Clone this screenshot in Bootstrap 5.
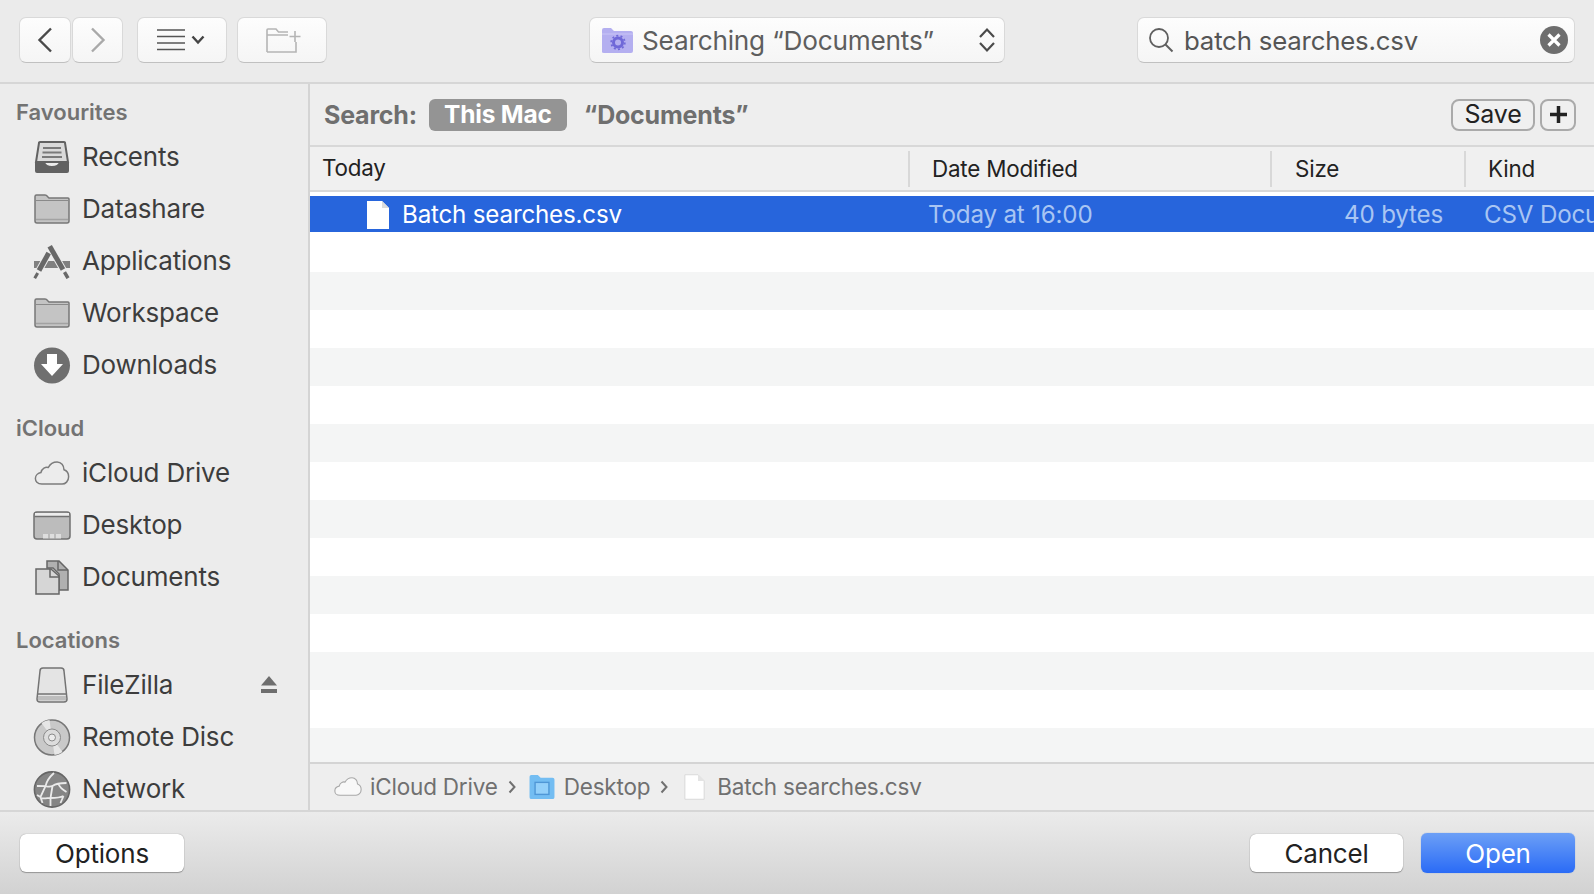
<!DOCTYPE html>
<html lang="en">
<head>
  <meta charset="UTF-8" />
  <title>Open</title>
  <link href="https://cdn.jsdelivr.net/npm/bootstrap@5.3.0/dist/css/bootstrap.min.css" rel="stylesheet" />
  <style>
    html, body { height: 100%; overflow: hidden; }
    body { font-family: Inter, "Liberation Sans", sans-serif; font-size: 26px; color: #3c3c3c; background: #ececec; letter-spacing: -.2px; line-height: 1.2; }
    .dlg { width: 1594px; height: 894px; }

    .tool-bar { height: 84px; flex: none; background: #ebebeb; border-bottom: 2px solid #d6d6d6; padding: 17px 19px 0; }
    .mac-tool { height: 46px; border-radius: 7px; background: linear-gradient(#fdfdfd, #f5f5f5); border: 1px solid #d9d9d9; border-bottom-color: #c0c0c0; padding: 0; }
    .tool-back { width: 52px; }
    .tool-fwd { width: 51px; margin-left: 1px; }
    .tool-view { width: 90px; margin-left: 14px; padding-right: 3px; }
    .tool-view.mac-tool { column-gap: 6px; }
    .tool-new { width: 90px; margin-left: 10px; }
    .tool-new svg { margin-left: 3px; }
    .place-pop { width: 416px; margin-left: 262px; padding: 2px 8px 0 12px; color: #5e5e5e; }
    .place-pop span { margin-left: 1px; font-size: 26.200px; }
    .find-box { width: 438px; margin-left: 132px; padding: 2px 6px 0 10px; color: #555; }
    .find-box span { margin-left: 2px; font-size: 25.800px; }
    .find-box svg, .place-pop svg { margin-top: -2px; }

    .mid-area { height: 726px; flex: none; }
    .side-bar { width: 310px; flex: none; background: #ececec; border-right: 2px solid #d4d4d4; padding-top: 15px; overflow: hidden; }
    .side-head { height: 26px; padding-left: 16px; font-size: 22px; font-weight: 600; color: #737373; line-height: 26px; letter-spacing: 0; }
    .side-gap { margin-top: 24px; }
    .side-row { height: 52px; padding-left: 33px; color: #3d3d3d; }
    .side-icon { width: 38px; margin-right: 11px; flex: none; }
    .side-head + .side-row { margin-top: 6px; }
    .eject-mark { margin-left: auto; margin-right: 30px; }

    .main-pane { min-width: 0; background: #fff; }
    .scope-bar { height: 63px; flex: none; background: #eeeeee; border-bottom: 2px solid #d8d8d8; padding: 0 18px 0 14px; font-size: 25px; font-weight: 700; color: #6f6f6f; }
    .scope-pill { height: 32px; width: 138px; margin-left: 12px; border-radius: 6px; background: #949494; color: #fff; font-size: 24.500px; }
    .scope-doc { margin-left: 17px; }
    .scope-btn { height: 32px; border: 2px solid #aaaaaa; border-radius: 8px; background: #f0f0f0; color: #222; font-weight: 400; font-size: 25px; letter-spacing: -.2px; line-height: 1; padding: 0; }
    .scope-save { width: 84px; margin-left: auto; }
    .scope-add { width: 36px; margin-left: 5px; }

    .col-heads { height: 45px; flex: none; background: #f0f0f0; border-bottom: 2px solid #d8d8d8; color: #222; font-size: 22.400px; }
    .cell-name { width: 598px; flex: none; }
    .cell-date { width: 362px; flex: none; }
    .cell-size { width: 194px; flex: none; }
    .col-heads .cell-name { padding-left: 12px; }
    .col-heads .cell-date, .col-heads .cell-size, .col-heads .cell-kind { padding-left: 22px; height: 36px; line-height: 36px; border-left: 2px solid #d8d8d8; }
    .col-heads .cell-size { padding-left: 23px; }
    .col-heads .cell-kind { flex: 1; }

    .file-list { flex: 1; overflow: hidden; background: #fff; padding-top: 4px; min-height: 0; }
    .file-row { height: 38px; flex: none; }
    .file-row:nth-child(odd) { background: #f4f5f5; }
    .file-row:nth-child(even) { background: #fff; }
    .file-row.sel-row { background: #2765dc; height: 36px; margin-bottom: 1.500px; padding-top: 1px; color: #fff; font-size: 24.200px; white-space: nowrap; overflow: hidden; }
    .sel-row .cell-name { padding-left: 56px; }
    .sel-row .file-txt { margin-left: 12px; }
    .sel-row .cell-date { padding-left: 20px; color: #a9c5f3; }
    .sel-row .cell-size { color: #a9c5f3; text-align: right; padding-right: 21px; }
    .sel-row .cell-kind { color: #a9c5f3; padding-left: 20px; }

    .path-bar { height: 48px; flex: none; background: #eeeeee; border-top: 2px solid #d4d4d4; padding: 0 0 1px 24px; font-size: 22.500px; color: #707070; }
    .path-sep { margin: 0 13px 0 10px; }
    .path-cloud { margin-right: 8px; }
    .path-folder { margin-right: 9px; }
    .path-doc { margin-left: 3px; margin-right: 12px; }

    .foot-bar { height: 84px; flex: none; background: linear-gradient(#ebebeb, #d2d2d2); border-top: 2px solid #d6d6d6; padding: 22px 19px 0 20px; }
    .push-btn { height: 38px; border: 0; border-radius: 6px; background: #fff; box-shadow: 0 0 1px #777, 0 1px 1px #999; color: #222; padding: 0; font-size: 26px; letter-spacing: -.2px; }
    .push-opts { width: 164px; }
    .push-cancel { width: 153px; margin-left: auto; }
    .push-open { width: 154px; margin-left: 18px; height: 40px; margin-top: -1px; color: #fff; background: linear-gradient(#6c9ff6, #2a6bf6); box-shadow: 0 0 1px #5b8de0; }
    .push-btn:hover, .push-btn:active { background: #fff; color: #222; }
    .push-open:hover, .push-open:active { background: linear-gradient(#6c9ff6, #2a6bf6); color: #fff; }
  </style>
</head>
<body>
  <svg width="0" height="0" class="position-absolute">
    <symbol id="ic-folder" viewBox="0 0 36 30">
      <path d="M1 27V2.500Q1 1 2.500 1H11q1.500 0 2.500 1.500L15 4h19q1 0 1 1v22q0 2-2 2H3q-2 0-2-2z" fill="#c4c4c4" stroke="#777" stroke-width="1.500"/>
      <path d="M1.500 6.500h33" stroke="#8a8a8a" fill="none"/>
      <path d="M2 25.500h32" stroke="#a2a2a2" stroke-width="1.500" fill="none"/>
    </symbol>
    <symbol id="ic-doc" viewBox="0 0 24 30">
      <path d="M1 1h15l7 7v21H1z" fill="#fff"/>
      <path d="M16 1v7h7z" fill="#dcdcdc"/>
    </symbol>
    <symbol id="ic-cloud" viewBox="0 0 38 26">
      <path d="M8 25C3 25 1 21.500 1 19c0-3.500 3-6 6-6.500C8 8 12 6 15 7c2-4 6-6 9.500-6C29 1 32 5 32 9.500c3 1 5 4 5 7.500 0 5-3.500 8-7 8z"/>
    </symbol>
  </svg>

  <div class="dlg d-flex flex-column">
    <div class="tool-bar d-flex align-items-start">
      <button class="btn mac-tool tool-back d-flex align-items-center justify-content-center" type="button" aria-label="Back">
        <svg width="16" height="26" viewBox="0 0 16 26"><path d="M14 1.500 2.500 13 14 24.500" fill="none" stroke="#4a4a4a" stroke-width="2.400"/></svg>
      </button>
      <button class="btn mac-tool tool-fwd d-flex align-items-center justify-content-center" type="button" aria-label="Forward">
        <svg width="16" height="26" viewBox="0 0 16 26"><path d="M2 1.500 13.500 13 2 24.500" fill="none" stroke="#a9a9a9" stroke-width="2.400"/></svg>
      </button>
      <button class="btn mac-tool tool-view d-flex align-items-center justify-content-center" type="button" aria-label="View">
        <svg width="28" height="22" viewBox="0 0 28 22"><path d="M0 1h28M0 7.500h28M0 14h28M0 20.500h28" stroke="#555" stroke-width="1.600"/></svg>
        <svg width="14" height="10" viewBox="0 0 14 10"><path d="M1.500 1.500 7 7.500l5.500-6" fill="none" stroke="#444" stroke-width="2.400"/></svg>
      </button>
      <button class="btn mac-tool tool-new d-flex align-items-center justify-content-center" type="button" aria-label="New folder">
        <svg width="35" height="25" viewBox="0 0 35 25"><path d="M1 24V2q0-1 1-1h8l2.500 3H22M1 7h21M30 14v10H1" fill="none" stroke="#b5b5b5" stroke-width="1.600"/><path d="M29 3v11M23.500 8.500h11" stroke="#b5b5b5" stroke-width="1.600" fill="none"/></svg>
      </button>
      <div class="mac-tool place-pop d-flex align-items-center">
        <svg class="me-2" width="31" height="25" viewBox="0 0 31 25">
          <path d="M0 24V2q0-2 2-2h7l3 3h17q2 0 2 2v18q0 2-2 2H2q-2 0-2-1z" fill="#b4aff0"/>
          <path d="M0 6h31" stroke="#c9c5f6"/>
          <circle cx="16" cy="14.500" r="4.500" fill="none" stroke="#6f68d8" stroke-width="3"/>
          <circle cx="16" cy="14.500" r="6.800" fill="none" stroke="#6f68d8" stroke-width="1.800" stroke-dasharray="2 2.300"/>
        </svg>
        <span>Searching “Documents”</span>
        <svg class="ms-auto" width="18" height="26" viewBox="0 0 18 26"><path d="M2 10 9 2.500 16 10M2 16l7 7.500 7-7.500" fill="none" stroke="#4a4a4a" stroke-width="2.200"/></svg>
      </div>
      <div class="mac-tool find-box d-flex align-items-center">
        <svg class="me-2" width="26" height="28" viewBox="0 0 26 28"><circle cx="11" cy="12" r="9" fill="none" stroke="#5f5f5f" stroke-width="1.800"/><path d="m17.500 18.500 7 7" stroke="#5f5f5f" stroke-width="2"/></svg>
        <span>batch searches.csv</span>
        <svg class="ms-auto" width="28" height="28" viewBox="0 0 28 28"><circle cx="14" cy="14" r="14" fill="#6e6e6e"/><path d="m8.500 8.500 11 11m0-11-11 11" stroke="#fff" stroke-width="3.200"/></svg>
      </div>
    </div>

    <div class="mid-area d-flex">
      <div class="side-bar">
        <div class="side-head">Favourites</div>
        <div class="side-row d-flex align-items-center">
          <svg class="side-icon" height="33" viewBox="0 0 38 33"><path d="M6 2q0-1 1-1h24q1 0 1 1l3 19H3z" fill="#dadada" stroke="#626262" stroke-width="2"/><path d="M10 7h18M9.500 11.500h19M9 16h20" stroke="#7a7a7a" stroke-width="2"/><path d="M2 21h10q1 4 7 4t7-4h10v9q0 2-2 2H4q-2 0-2-2z" fill="#626262"/></svg>
          <span>Recents</span>
        </div>
        <div class="side-row d-flex align-items-center">
          <svg class="side-icon" height="30"><use href="#ic-folder"/></svg>
          <span>Datashare</span>
        </div>
        <div class="side-row d-flex align-items-center">
          <svg class="side-icon" height="36" viewBox="0 0 38 36">
            <path d="M1 18h36v7H1z" fill="#808080"/>
            <path d="M16.700 3.300 35 35.300M15.700 10 1.700 35.300" stroke="#ececec" stroke-width="7" fill="none"/>
            <path d="M16.700 3.300 30 26.500" stroke="#686868" stroke-width="5" fill="none"/>
            <path d="m31.500 29.200 3.500 6" stroke="#686868" stroke-width="3.500" fill="none"/>
            <path d="M15.700 10 6 27.500" stroke="#686868" stroke-width="5" fill="none"/>
            <path d="M4.700 30 1.700 35.300" stroke="#686868" stroke-width="3" fill="none"/>
          </svg>
          <span>Applications</span>
        </div>
        <div class="side-row d-flex align-items-center">
          <svg class="side-icon" height="30"><use href="#ic-folder"/></svg>
          <span>Workspace</span>
        </div>
        <div class="side-row d-flex align-items-center">
          <svg class="side-icon" height="37" viewBox="0 0 37 37"><circle cx="18.500" cy="18.500" r="18" fill="#6f6f6f"/><path d="M13.500 7h10v10h6l-11 12-11-12h6z" fill="#fff"/></svg>
          <span>Downloads</span>
        </div>
        <div class="side-head side-gap">iCloud</div>
        <div class="side-row d-flex align-items-center">
          <svg class="side-icon" height="24" fill="#ececec" stroke="#7c7c7c" stroke-width="1.600"><use href="#ic-cloud"/></svg>
          <span>iCloud Drive</span>
        </div>
        <div class="side-row d-flex align-items-center">
          <svg class="side-icon" height="29" viewBox="0 0 38 29"><rect x="1" y="1" width="36" height="27" rx="3" fill="#bcbcbc" stroke="#707070" stroke-width="1.500"/><path d="M2 2h34v3H2z" fill="#ececec"/><path d="M1.500 5.500h35" stroke="#707070" stroke-width="1.500"/><path d="M10 23h18v4.500H10z" fill="#dedede"/><path d="M16 23v5M22 23v5" stroke="#9a9a9a"/></svg>
          <span>Desktop</span>
        </div>
        <div class="side-row d-flex align-items-center">
          <svg class="side-icon" height="35" viewBox="0 0 38 35"><path d="M14 1h12l9 9v20H26V14l-6-6h-6z" fill="#b0b0b0" stroke="#666" stroke-width="1.500"/><path d="M3 9h15l8 7v18H3z" fill="#d6d6d6" stroke="#666" stroke-width="1.500"/><path d="M17 9v8h9M25 1v9h10" fill="none" stroke="#666" stroke-width="1.500"/></svg>
          <span>Documents</span>
        </div>
        <div class="side-head side-gap">Locations</div>
        <div class="side-row d-flex align-items-center">
          <svg class="side-icon" height="36" viewBox="0 0 38 36"><path d="M7 4q0-3 3-3h18q3 0 3 3l3 28q0 3-3 3H7q-3 0-3-3z" fill="#e4e4e4" stroke="#737373" stroke-width="1.500"/><path d="M4.500 27h29" stroke="#737373" stroke-width="1.500"/><path d="M5 29h28v4.500H5z" fill="#bdbdbd"/></svg>
          <span>FileZilla</span>
          <svg class="eject-mark" width="18" height="18" viewBox="0 0 18 18"><path d="M9 0 17 9.500H1z" fill="#6e6e6e"/><path d="M1 13h16v4H1z" fill="#6e6e6e"/></svg>
        </div>
        <div class="side-row d-flex align-items-center">
          <svg class="side-icon" height="37" viewBox="0 0 37 37"><circle cx="18.500" cy="18.500" r="17.500" fill="#c9c9c9" stroke="#777" stroke-width="1.500"/><path d="M18.500 18.500 8 4A18 18 0 0 1 16 1zM18.500 18.500 29 33A18 18 0 0 1 21 36z" fill="#e6e6e6"/><circle cx="18.500" cy="18.500" r="8.500" fill="#dcdcdc" stroke="#8a8a8a"/><circle cx="18.500" cy="18.500" r="3.500" fill="#ececec" stroke="#8a8a8a"/></svg>
          <span>Remote Disc</span>
        </div>
        <div class="side-row d-flex align-items-center">
          <svg class="side-icon" height="37" viewBox="0 0 37 37"><circle cx="18.500" cy="18.500" r="17.600" fill="#858585" stroke="#666" stroke-width="1.600"/><g fill="none" stroke="#eaeaea" stroke-width="1.800"><path d="M20.500 2C16 6 13 10 12 15.200L3.500 15M12 15.200 7 26 3.500 24M19 15c4-3 9-3 14-3M25 13c1 3 3 5 8 8M12 15.200c2 1 5 0 7-.2M19 15l-2 12M7 27c3 1 7 0 10 0s9 0 13-2M17 27l0 8M30 25l-3 7M7 26l2 6"/></g></svg>
          <span>Network</span>
        </div>
      </div>

      <div class="main-pane flex-grow-1 d-flex flex-column">
        <div class="scope-bar d-flex align-items-center">
          <span>Search:</span>
          <span class="scope-pill d-flex align-items-center justify-content-center">This Mac</span>
          <span class="scope-doc">“Documents”</span>
          <button class="btn scope-btn scope-save" type="button">Save</button>
          <button class="btn scope-btn scope-add d-flex align-items-center justify-content-center" type="button" aria-label="Add">
            <svg width="17" height="17" viewBox="0 0 17 17"><path d="M8.500 0v17M0 8.500h17" stroke="#222" stroke-width="3.500"/></svg>
          </button>
        </div>
        <div class="col-heads d-flex align-items-center">
          <div class="cell-name">Today</div>
          <div class="cell-date">Date Modified</div>
          <div class="cell-size">Size</div>
          <div class="cell-kind">Kind</div>
        </div>
        <div class="file-list d-flex flex-column">
          <div class="file-row sel-row d-flex align-items-center">
            <div class="cell-name d-flex align-items-center">
              <svg width="24" height="30"><use href="#ic-doc"/></svg>
              <span class="file-txt">Batch searches.csv</span>
            </div>
            <div class="cell-date">Today at 16:00</div>
            <div class="cell-size">40 bytes</div>
            <div class="cell-kind">CSV Document</div>
          </div>
          <div class="file-row"></div>
          <div class="file-row"></div>
          <div class="file-row"></div>
          <div class="file-row"></div>
          <div class="file-row"></div>
          <div class="file-row"></div>
          <div class="file-row"></div>
          <div class="file-row"></div>
          <div class="file-row"></div>
          <div class="file-row"></div>
          <div class="file-row"></div>
          <div class="file-row"></div>
          <div class="file-row"></div>
          <div class="file-row"></div>
        </div>
        <div class="path-bar d-flex align-items-center">
          <svg class="path-cloud" width="28" height="19" viewBox="0 0 38 26" fill="#f8f8f8" stroke="#a8a8a8" stroke-width="1.500"><use href="#ic-cloud"/></svg>
          <span>iCloud Drive</span>
          <svg class="path-sep" width="8" height="14" viewBox="0 0 8 14"><path d="m1.500 1.500 5 5.500-5 5.500" fill="none" stroke="#707070" stroke-width="2"/></svg>
          <svg class="path-folder" width="26" height="24" viewBox="0 0 27 26"><path d="M0 24V2q0-2 2-2h7l3 3h13q2 0 2 2v19q0 2-2 2H2q-2 0-2-2z" fill="#73bdf2"/><rect x="6" y="8" width="15" height="13" fill="#93d0fa" stroke="#4f97d6" stroke-width="1.500"/></svg>
          <span>Desktop</span>
          <svg class="path-sep" width="8" height="14" viewBox="0 0 8 14"><path d="m1.500 1.500 5 5.500-5 5.500" fill="none" stroke="#707070" stroke-width="2"/></svg>
          <svg class="path-doc" width="21" height="28" viewBox="0 0 24 30"><path d="M1 1h15l7 7v21H1z" fill="#fff" stroke="#d6d6d6"/><path d="M16 1v7h7z" fill="#e4e4e4"/></svg>
          <span>Batch searches.csv</span>
        </div>
      </div>
    </div>

    <div class="foot-bar d-flex align-items-start">
      <button class="btn push-btn push-opts" type="button">Options</button>
      <button class="btn push-btn push-cancel" type="button">Cancel</button>
      <button class="btn push-btn push-open" type="button">Open</button>
    </div>
  </div>
  <script src="https://cdn.jsdelivr.net/npm/bootstrap@5.3.0/dist/js/bootstrap.bundle.min.js"></script>
</body>
</html>
